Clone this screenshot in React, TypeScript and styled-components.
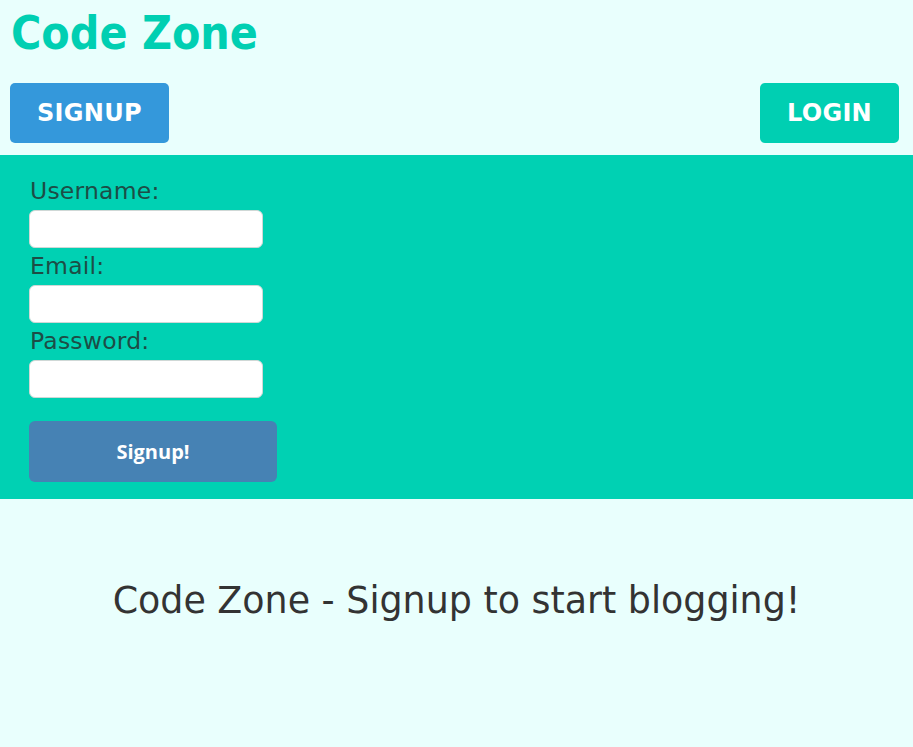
import React from "react";
import styled, { createGlobalStyle } from "styled-components";

const GlobalStyle = createGlobalStyle`
  html, body {
    margin: 0;
    padding: 0;
    background: #e9fffd;
  }
  body {
    font-family: "DejaVu Sans", Verdana, sans-serif;
  }
  * { box-sizing: border-box; }
`;

const Page = styled.div`
  min-height: 747px;
  background: #e9fffd;
  display: flex;
  flex-direction: column;
`;

const Header = styled.header`
  display: flex;
  flex-direction: column;
  padding: 5px 14px 12px 10px;
  gap: 22px;
`;

const Title = styled.h1`
  margin: 0;
  font-family: "DejaVu Sans Condensed", "DejaVu Sans", sans-serif;
  font-stretch: condensed;
  font-weight: 700;
  font-size: 46px;
  line-height: 56px;
  color: #00cfb2;
  padding-left: 1px;
`;

const NavRow = styled.nav`
  display: flex;
  justify-content: space-between;
  align-items: center;
`;

const NavButton = styled.button<{ $bg: string }>`
  height: 60px;
  padding: 0 27px;
  border: none;
  border-radius: 5px;
  background: ${(p) => p.$bg};
  color: #fff;
  font-family: "DejaVu Sans", Verdana, sans-serif;
  font-weight: 700;
  font-size: 24px;
  letter-spacing: 0.3px;
  cursor: pointer;
`;

const FormSection = styled.section`
  background: #00d1b3;
  padding: 18px 29px 17px;
`;

const Form = styled.form`
  display: flex;
  flex-direction: column;
  align-items: flex-start;
`;

const Label = styled.label`
  display: block;
  font-family: "DejaVu Sans", Verdana, sans-serif;
  font-size: 23.5px;
  line-height: 37px;
  letter-spacing: 0.2px;
  color: #1d4d46;
  padding-left: 1px;
`;

const Input = styled.input`
  width: 234px;
  height: 38px;
  border: 1px solid #cfd8d6;
  border-radius: 6px;
  background: #fff;
  padding: 0 8px;
  font-size: 16px;
  outline: none;
`;

const SubmitButton = styled.button`
  margin-top: 23px;
  width: 248px;
  height: 61px;
  border: none;
  border-radius: 6px;
  background: #4682b4;
  color: #fff;
  font-family: "Open Sans", "Noto Sans", sans-serif;
  font-weight: 700;
  font-size: 20px;
  cursor: pointer;
`;

const Hero = styled.section`
  flex: 1;
  display: flex;
  justify-content: center;
  padding-top: 80px;
`;

const Tagline = styled.p`
  margin: 0;
  font-family: "DejaVu Sans", Verdana, sans-serif;
  font-size: 36.4px;
  line-height: 43px;
  color: #333;
`;

export default function App() {
  return (
    <>
      <GlobalStyle />
      <Page>
        <Header>
          <Title>Code Zone</Title>
          <NavRow>
            <NavButton $bg="#3498db">SIGNUP</NavButton>
            <NavButton $bg="#00cfb2">LOGIN</NavButton>
          </NavRow>
        </Header>
        <FormSection>
          <Form onSubmit={(e) => e.preventDefault()}>
            <Label htmlFor="username">Username:</Label>
            <Input id="username" type="text" />
            <Label htmlFor="email">Email:</Label>
            <Input id="email" type="email" />
            <Label htmlFor="password">Password:</Label>
            <Input id="password" type="password" />
            <SubmitButton type="submit">Signup!</SubmitButton>
          </Form>
        </FormSection>
        <Hero>
          <Tagline>Code Zone - Signup to start blogging!</Tagline>
        </Hero>
      </Page>
    </>
  );
}
